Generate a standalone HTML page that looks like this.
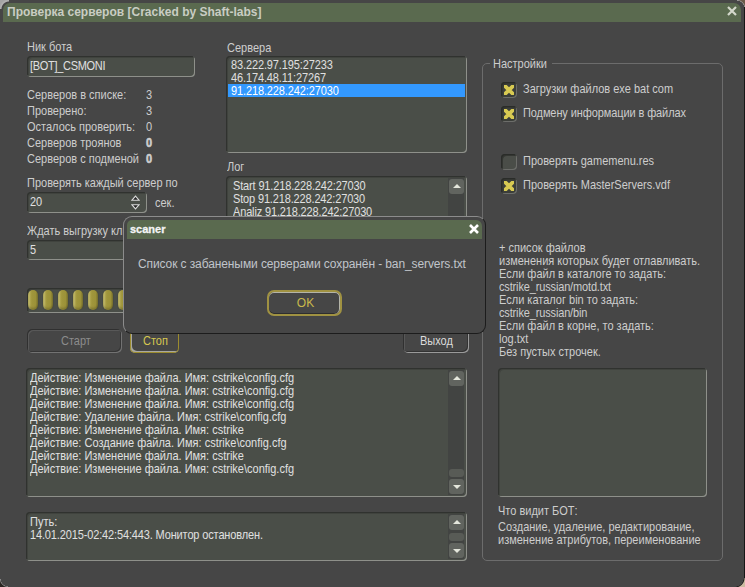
<!DOCTYPE html>
<html><head><meta charset="utf-8">
<style>
*{box-sizing:border-box;margin:0;padding:0}
html,body{width:745px;height:587px;overflow:hidden;background:#464646}
body{position:relative;font-family:"Liberation Sans",sans-serif;font-size:11px;color:#cdcdcd}
.a{position:absolute;white-space:nowrap;line-height:13px;transform:scaleY(1.17);transform-origin:0 2.5px}
.tb{position:absolute;background:#4a4e48;border-radius:4px;box-shadow:inset 1px 1px 0 #30322f,inset -1px -1px 0 #8e908a,inset 2px 2px 0 #40433e}
.sb{position:absolute;background:#424442;width:16px}
.sbtn{position:absolute;width:15px;height:15px;border-radius:3px;background:#61645f}
.up:after,.dn:after{content:"";position:absolute;left:3.5px;border-left:4px solid transparent;border-right:4px solid transparent}
.up:after{top:5px;border-bottom:4.5px solid #e4e6dc}
.dn:after{top:5.5px;border-top:4.5px solid #e4e6dc}
.thumb{position:absolute;width:15px;height:8px;border-radius:3px;background:#585b56}
.btn{position:absolute;border-radius:5px;box-shadow:inset 1px 1px 0 #303030,inset -1px -1px 0 #727272,inset 2px 2px 0 #585858,inset -2px -2px 0 #363636;background:#464646}
.bt{position:absolute;white-space:nowrap;line-height:13px;transform:scaleY(1.17);transform-origin:0 2.5px}
.cb{position:absolute;width:16px;height:16px;border-radius:4px;background:#3b3e39;box-shadow:inset 1px 1px 0 #2a2c29,inset -1px -1px 0 #6c6d6a,inset 2px 2px 0 #343632}
.seg{position:absolute;width:10px;height:20px;border-radius:5px/5px;background:linear-gradient(90deg,#b4ac5c 0,#c0b868 12%,#a89e44 28%,#a0963c 40%,#9c9238 75%,#7c7430 100%);box-shadow:0 0 1px #30302a,inset 0 -2px 2px rgba(0,0,0,.18)}
</style></head><body>

<div style="position:absolute;left:0;top:0;width:9px;height:9px;background:radial-gradient(circle at 9px 9px,transparent 7px,#b4b4b4 8px,#a4a4a4 10px)"></div>
<div style="position:absolute;left:737px;top:0;width:8px;height:8px;background:radial-gradient(circle at 0 8px,transparent 7px,#9a9a9a 7.5px,#6a5a48 8.5px)"></div>
<div style="position:absolute;left:744px;top:7px;width:1px;height:573px;background:#161616"></div>
<div style="position:absolute;left:735px;top:578px;width:10px;height:9px;background:radial-gradient(circle at 0 0,transparent 8.5px,#141414 9px,#cdbba2 10px)"></div>
<div style="position:absolute;left:0;top:579px;width:8px;height:8px;background:radial-gradient(circle at 8px 0,transparent 7px,#8a8a8a 7.5px,#2a2622 8.5px)"></div>
<div style="position:absolute;left:3px;top:3px;width:738px;height:19px;background:#5a6a4f;border-radius:7px 7px 0 0"></div>
<div class="a" style="left:7px;top:4px;font-size:12px;font-weight:bold;color:#c9cdc3;line-height:14px;transform:scaleY(1.08);transform-origin:0 3px">Проверка серверов [Cracked by Shaft-labs]</div>
<svg style="position:absolute;left:726px;top:5px" width="12" height="12" viewBox="0 0 12 12"><path d="M2 2L10 10M10 2L2 10" stroke="#d4d8cc" stroke-width="2.2"/></svg>
<div class="a" style="left:27px;top:40px;">Ник бота</div>
<div class="tb" style="left:27px;top:56px;width:168px;height:21px"></div>
<div class="a" style="left:30px;top:59px;color:#e0e0e0;letter-spacing:-0.3px">[BOT]_CSMONI</div>
<div class="a" style="left:27px;top:88px;">Серверов в списке:</div>
<div class="a" style="left:146px;top:88px;">3</div>
<div class="a" style="left:27px;top:104px;">Проверено:</div>
<div class="a" style="left:146px;top:104px;">3</div>
<div class="a" style="left:27px;top:120px;">Осталось проверить:</div>
<div class="a" style="left:146px;top:120px;">0</div>
<div class="a" style="left:27px;top:136px;">Серверов троянов</div>
<div class="a" style="left:146px;top:136px;font-weight:bold;-webkit-text-stroke:0.5px #d0d0d0">0</div>
<div class="a" style="left:27px;top:152px;">Серверов с подменой</div>
<div class="a" style="left:146px;top:152px;font-weight:bold;-webkit-text-stroke:0.5px #d0d0d0">0</div>
<div class="a" style="left:27px;top:176px;">Проверять каждый сервер по</div>
<div class="tb" style="left:27px;top:192px;width:120px;height:21px"></div>
<div class="a" style="left:30px;top:195px;color:#e0e0e0;">20</div>
<svg style="position:absolute;left:131px;top:195px" width="9" height="15" viewBox="0 0 9 15"><path d="M1 5.2L4.5 1.2L8 5.2Z" fill="#222" stroke="#dcdcdc" stroke-width="1.1" stroke-linejoin="miter"/><path d="M1 9.8L4.5 13.8L8 9.8Z" fill="#222" stroke="#dcdcdc" stroke-width="1.1"/></svg>
<div class="a" style="left:155px;top:196px;">сек.</div>
<div class="a" style="left:27px;top:224px;">Ждать выгрузку клиента</div>
<div class="tb" style="left:27px;top:240px;width:440px;height:20px"></div>
<div class="a" style="left:30px;top:243px;color:#e0e0e0;">5</div>
<div class="tb" style="left:27px;top:288px;width:440px;height:25px"></div>
<div class="seg" style="left:28px;top:290px"></div>
<div class="seg" style="left:43px;top:290px"></div>
<div class="seg" style="left:58px;top:290px"></div>
<div class="seg" style="left:73px;top:290px"></div>
<div class="seg" style="left:88px;top:290px"></div>
<div class="seg" style="left:103px;top:290px"></div>
<div class="seg" style="left:118px;top:290px"></div>
<div class="btn" style="left:27px;top:329px;width:95px;height:24px"></div>
<div class="a" style="left:61px;top:334px;color:#8c8c8c">Старт</div>
<div class="btn" style="left:130px;top:329px;width:49px;height:24px;box-shadow:inset 0 0 0 1px #9c8c2e,inset 2px -2px 0 #a8a8a0"></div>
<div class="a" style="left:143px;top:334px;color:#d6c650">Стоп</div>
<div class="btn" style="left:403px;top:329px;width:66px;height:24px;box-shadow:inset 1px 1px 0 #303030,inset -1px -1px 0 #9a9a9a,inset 2px 2px 0 #585858,inset -2px -2px 0 #333"></div>
<div class="a" style="left:420px;top:334px;color:#dcdcdc">Выход</div>
<div class="a" style="left:227px;top:41px;">Сервера</div>
<div class="tb" style="left:226px;top:56px;width:241px;height:97px"></div>
<div style="position:absolute;left:228px;top:84px;width:237px;height:13px;background:#3399ff"></div>
<div class="a" style="left:231px;top:58px;color:#e0e0e0;letter-spacing:-0.12px">83.222.97.195:27233</div>
<div class="a" style="left:231px;top:71px;color:#e0e0e0;letter-spacing:-0.12px">46.174.48.11:27267</div>
<div class="a" style="left:231px;top:84px;color:#e0e0e0;color:#fff;letter-spacing:-0.12px">91.218.228.242:27030</div>
<div class="a" style="left:227px;top:160px;">Лог</div>
<div class="tb" style="left:226px;top:176px;width:241px;height:60px"></div>
<div class="sb" style="left:448px;top:178px;height:56px"></div>
<div class="sbtn up" style="left:449px;top:179px"></div>
<div class="a" style="left:233px;top:179px;color:#e0e0e0;letter-spacing:-0.15px">Start 91.218.228.242:27030</div>
<div class="a" style="left:233px;top:192px;color:#e0e0e0;letter-spacing:-0.15px">Stop 91.218.228.242:27030</div>
<div class="a" style="left:233px;top:205px;color:#e0e0e0;letter-spacing:-0.15px">Analiz 91.218.228.242:27030</div>
<div class="tb" style="left:26px;top:368px;width:441px;height:129px"></div>
<div class="sb" style="left:448px;top:370px;height:125px"></div>
<div class="sbtn up" style="left:449px;top:371px"></div>
<div class="thumb" style="left:449px;top:469px"></div>
<div class="sbtn dn" style="left:449px;top:479px"></div>
<div class="a" style="left:30px;top:371px;color:#e0e0e0;">Действие: Изменение файла. Имя: cstrike\config.cfg</div>
<div class="a" style="left:30px;top:384px;color:#e0e0e0;">Действие: Изменение файла. Имя: cstrike\config.cfg</div>
<div class="a" style="left:30px;top:397px;color:#e0e0e0;">Действие: Изменение файла. Имя: cstrike\config.cfg</div>
<div class="a" style="left:30px;top:410px;color:#e0e0e0;">Действие: Удаление файла. Имя: cstrike\config.cfg</div>
<div class="a" style="left:30px;top:423px;color:#e0e0e0;">Действие: Изменение файла. Имя: cstrike</div>
<div class="a" style="left:30px;top:436px;color:#e0e0e0;">Действие: Создание файла. Имя: cstrike\config.cfg</div>
<div class="a" style="left:30px;top:449px;color:#e0e0e0;">Действие: Изменение файла. Имя: cstrike</div>
<div class="a" style="left:30px;top:462px;color:#e0e0e0;">Действие: Изменение файла. Имя: cstrike\config.cfg</div>
<div class="tb" style="left:26px;top:512px;width:441px;height:49px"></div>
<div class="sb" style="left:448px;top:514px;height:45px"></div>
<div class="sbtn up" style="left:449px;top:515px"></div>
<div class="thumb" style="left:449px;top:533px"></div>
<div class="sbtn dn" style="left:449px;top:543px"></div>
<div class="a" style="left:30px;top:515px;color:#e0e0e0;">Путь:</div>
<div class="a" style="left:30px;top:528px;color:#e0e0e0;letter-spacing:-0.14px">14.01.2015-02:42:54:443. Монитор остановлен.</div>
<div style="position:absolute;left:482px;top:63px;width:241px;height:498px;border:1px solid #6c6c6c;border-radius:5px"></div>
<div style="position:absolute;left:490px;top:58px;width:62px;height:10px;background:#464646"></div>
<div class="a" style="left:493px;top:57px;">Настройки</div>
<div class="cb" style="left:501px;top:82px"></div>
<svg style="position:absolute;left:504px;top:85px" width="10" height="10" viewBox="0 0 10 10"><path d="M0 0L10 10M10 0L0 10" stroke="#d8ca52" stroke-width="3.8"/></svg>
<div class="a" style="left:523px;top:82px;">Загрузки файлов exe bat com</div>
<div class="cb" style="left:501px;top:106px"></div>
<svg style="position:absolute;left:504px;top:109px" width="10" height="10" viewBox="0 0 10 10"><path d="M0 0L10 10M10 0L0 10" stroke="#d8ca52" stroke-width="3.8"/></svg>
<div class="a" style="left:523px;top:106px;letter-spacing:-0.1px">Подмену информации в файлах</div>
<div class="cb" style="left:501px;top:154px;background:#4a4d48"></div>
<div class="a" style="left:523px;top:154px;">Проверять gamemenu.res</div>
<div class="cb" style="left:501px;top:178px"></div>
<svg style="position:absolute;left:504px;top:181px" width="10" height="10" viewBox="0 0 10 10"><path d="M0 0L10 10M10 0L0 10" stroke="#d8ca52" stroke-width="3.8"/></svg>
<div class="a" style="left:523px;top:178px;">Проверять MasterServers.vdf</div>
<div class="a" style="left:499px;top:241px;">+ список файлов</div>
<div class="a" style="left:499px;top:254px;">изменения которых будет отлавливать.</div>
<div class="a" style="left:499px;top:267px;">Если файл в каталоге то задать:</div>
<div class="a" style="left:499px;top:280px;letter-spacing:-0.15px">cstrike_russian/motd.txt</div>
<div class="a" style="left:499px;top:293px;">Если каталог bin то задать:</div>
<div class="a" style="left:499px;top:306px;letter-spacing:-0.15px">cstrike_russian/bin</div>
<div class="a" style="left:499px;top:319px;">Если файл в корне, то задать:</div>
<div class="a" style="left:499px;top:332px;">log.txt</div>
<div class="a" style="left:499px;top:345px;">Без пустых строчек.</div>
<div class="tb" style="left:498px;top:368px;width:209px;height:129px"></div>
<div class="a" style="left:498px;top:504px;">Что видит БОТ:</div>
<div class="a" style="left:498px;top:520px;">Создание, удаление, редактирование,</div>
<div class="a" style="left:498px;top:533px;">изменение атрибутов, переименование</div>
<div style="position:absolute;left:123px;top:216px;width:363px;height:118px;background:#464646;border:1px solid;border-color:#8c8c8c #1c1c1c #1c1c1c #8c8c8c;border-radius:9px"></div>
<div style="position:absolute;left:127px;top:220px;width:355px;height:19px;background:#5a6a4f;border-radius:5px 6px 0 0"></div>
<div class="a" style="left:130px;top:222px;font-size:11px;font-weight:bold;color:#f4f4f4;line-height:14px;transform:none;-webkit-text-stroke:0.3px #f4f4f4">scaner</div>
<svg style="position:absolute;left:468px;top:223px" width="12" height="12" viewBox="0 0 12 12"><path d="M2 2L10 10M10 2L2 10" stroke="#ffffff" stroke-width="2.6"/></svg>
<div class="a" style="left:138px;top:257px;font-size:12px;color:#c0c4ca;line-height:15px;letter-spacing:-0.1px;transform:none">Список с забанеными серверами сохранён - ban_servers.txt</div>
<div style="position:absolute;left:267px;top:290px;width:75px;height:26px;border-radius:7px;border:2px solid #a09242;box-shadow:inset 0 1px 0 #b4b4a8,inset -1px 0 0 #b4b4a8,inset 0 -1px 0 #2e2e2e"></div>
<div class="a" style="left:268px;top:296px;width:75px;text-align:center;font-size:12px;color:#c8b84c;line-height:15px;transform:none">OK</div>
</body></html>
